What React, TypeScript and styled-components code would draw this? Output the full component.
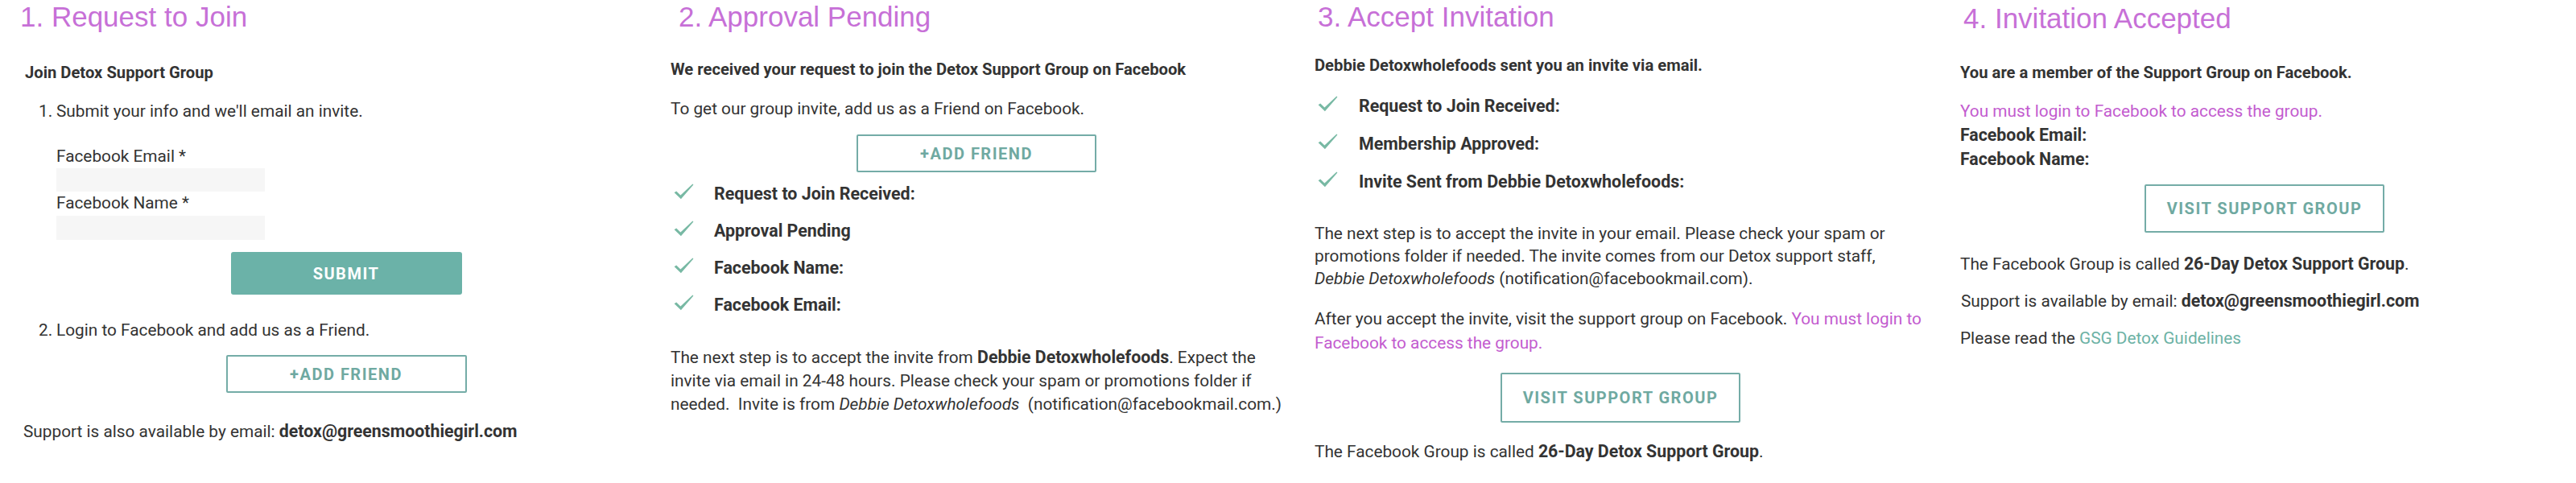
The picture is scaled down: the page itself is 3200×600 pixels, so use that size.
import React from "react";
import styled, { createGlobalStyle } from "styled-components";

const GlobalStyle = createGlobalStyle`
  html, body {
    margin: 0;
    padding: 0;
    background: #ffffff;
  }
  body {
    width: 3200px;
    height: 600px;
    overflow: hidden;
    font-family: Roboto, "Liberation Sans", Arial, sans-serif;
    color: #333333;
  }
`;

const Page = styled.div`
  display: grid;
  grid-template-columns: repeat(4, 800px);
  width: 3200px;
  height: 600px;
  background: #ffffff;
`;

const Panel = styled.section<{ $left: number; $right: number }>`
  display: flex;
  flex-direction: column;
  align-items: stretch;
  padding: 0 ${(p) => p.$right}px 0 ${(p) => p.$left}px;
  box-sizing: border-box;
  width: 800px;
  height: 600px;
`;

const StepTitle = styled.h1<{ $indent: number; $mt: number }>`
  margin: ${(p) => p.$mt}px 0 0 ${(p) => p.$indent}px;
  font-family: "Liberation Sans", Arial, sans-serif;
  font-weight: 400;
  font-size: 35px;
  line-height: 40px;
  color: #c770d7;
  white-space: nowrap;
`;

const Lead = styled.p<{ $mt: number; $indent?: number }>`
  margin: ${(p) => p.$mt}px 0 0 ${(p) => p.$indent ?? 0}px;
  font-size: 20.2px;
  font-weight: 700;
  line-height: 29px;
  color: #333333;
  white-space: nowrap;
`;

const Text = styled.p<{ $mt: number; $lh?: number; $indent?: number }>`
  margin: ${(p) => p.$mt}px 0 0 ${(p) => p.$indent ?? 0}px;
  font-size: 20.8px;
  font-weight: 400;
  line-height: ${(p) => p.$lh ?? 29}px;
  color: #333333;
  white-space: nowrap;
`;

const Strong = styled.strong`
  font-weight: 700;
  font-size: 1.025em;
`;

const Em = styled.em`
  font-style: italic;
`;

const Purple = styled.span`
  color: #c35ccf;
`;

const Link = styled.a`
  color: #6db2a5;
  text-decoration: none;
`;

const Steps = styled.ol`
  list-style: none;
  margin: 0 0 0 19px;
  padding: 0;
  display: flex;
  flex-direction: column;
`;

const StepItem = styled.li<{ $mt: number }>`
  display: grid;
  grid-template-columns: 22px 1fr;
  margin-top: ${(p) => p.$mt}px;
  font-size: 20.8px;
  line-height: 29px;
  white-space: nowrap;
`;

const Num = styled.span`
  white-space: nowrap;
`;

const StepBody = styled.div`
  display: flex;
  flex-direction: column;
  min-width: 0;
`;

const FieldLabel = styled.label<{ $mt: number }>`
  display: block;
  margin-top: ${(p) => p.$mt}px;
  font-size: 20.8px;
  line-height: 29px;
`;

const FieldInput = styled.div<{ $mt: number; $h: number }>`
  margin-top: ${(p) => p.$mt}px;
  width: 259px;
  height: ${(p) => p.$h}px;
  background: #f6f6f6;
`;

const ButtonRow = styled.div<{ $mt: number }>`
  display: flex;
  justify-content: center;
  margin-top: ${(p) => p.$mt}px;
`;

const SolidButton = styled.button`
  width: 287px;
  height: 53px;
  border: none;
  border-radius: 3px;
  background: #6bb2a8;
  color: #ffffff;
  font-family: Roboto, sans-serif;
  font-weight: 700;
  font-size: 20px;
  letter-spacing: 1.5px;
  padding: 0;
`;

const OutlineButton = styled.button<{ $w: number; $h: number }>`
  width: ${(p) => p.$w}px;
  height: ${(p) => p.$h}px;
  box-sizing: border-box;
  border: 2px solid #74aca7;
  border-radius: 2px;
  background: #ffffff;
  color: #6fa9a1;
  font-family: Roboto, sans-serif;
  font-weight: 700;
  font-size: 20px;
  letter-spacing: 1.5px;
  padding: 0;
`;

const CheckList = styled.ul<{ $mt: number; $gap: number }>`
  list-style: none;
  margin: ${(p) => p.$mt}px 0 0;
  padding: 0;
  display: flex;
  flex-direction: column;
  gap: ${(p) => p.$gap}px;
`;

const CheckRow = styled.li<{ $textGap: number }>`
  display: flex;
  align-items: center;
  gap: ${(p) => p.$textGap}px;
  padding-left: 4px;
  height: 29px;
  font-size: 21.4px;
  font-weight: 700;
  line-height: 29px;
  white-space: nowrap;
`;

const CheckSvg = styled.svg`
  flex: none;
  width: 25px;
  height: 20px;
  margin-top: -6px;
`;

const Check = () => (
  <CheckSvg viewBox="0 0 25 20">
    <path
      d="M0.6 11.2 L3.2 9.4 L8.4 14.6 L23.4 0.6 L24.4 1.4 L8.9 19.2 Z"
      fill="#78b9a4"
    />
  </CheckSvg>
);

const CheckItems = ({
  items,
  mt,
  gap,
  textGap,
}: {
  items: string[];
  mt: number;
  gap: number;
  textGap: number;
}) => (
  <CheckList $mt={mt} $gap={gap}>
    {items.map((item) => (
      <CheckRow key={item} $textGap={textGap}>
        <Check />
        {item}
      </CheckRow>
    ))}
  </CheckList>
);

const RequestPanel = () => (
  <Panel $left={29} $right={10}>
    <StepTitle $indent={-4} $mt={1}>
      1. Request to Join
    </StepTitle>
    <Lead $mt={35} $indent={2}>
      Join Detox Support Group
    </Lead>
    <Steps>
      <StepItem $mt={19}>
        <Num>1.</Num>
        <StepBody>
          <span>Submit your info and we'll email an invite.</span>
          <FieldLabel $mt={27}>Facebook Email *</FieldLabel>
          <FieldInput $mt={0} $h={29} />
          <FieldLabel $mt={0}>Facebook Name *</FieldLabel>
          <FieldInput $mt={1} $h={30} />
          <ButtonRow $mt={15}>
            <SolidButton>SUBMIT</SolidButton>
          </ButtonRow>
        </StepBody>
      </StepItem>
      <StepItem $mt={30}>
        <Num>2.</Num>
        <StepBody>
          <span>Login to Facebook and add us as a Friend.</span>
          <ButtonRow $mt={16}>
            <OutlineButton $w={299} $h={47}>
              +ADD FRIEND
            </OutlineButton>
          </ButtonRow>
        </StepBody>
      </StepItem>
    </Steps>
    <Text $mt={33}>
      Support is also available by email:{" "}
      <Strong>detox@greensmoothiegirl.com</Strong>
    </Text>
  </Panel>
);

const PendingPanel = () => (
  <Panel $left={33} $right={7}>
    <StepTitle $indent={10} $mt={1}>
      2. Approval Pending
    </StepTitle>
    <Lead $mt={31}>
      We received your request to join the Detox Support Group on Facebook
    </Lead>
    <Text $mt={20}>To get our group invite, add us as a Friend on Facebook.</Text>
    <ButtonRow $mt={17}>
      <OutlineButton $w={298} $h={47}>
        +ADD FRIEND
      </OutlineButton>
    </ButtonRow>
    <CheckItems
      mt={12}
      gap={17}
      textGap={25}
      items={[
        "Request to Join Received:",
        "Approval Pending",
        "Facebook Name:",
        "Facebook Email:",
      ]}
    />
    <Text $mt={36}>
      The next step is to accept the invite from{" "}
      <Strong>Debbie Detoxwholefoods</Strong>. Expect the
      <br />
      invite via email in 24-48 hours. Please check your spam or promotions
      folder if
      <br />
      needed.&nbsp; Invite is from <Em>Debbie Detoxwholefoods</Em>&nbsp;
      (notification@facebookmail.com.)
    </Text>
  </Panel>
);

const InvitePanel = () => (
  <Panel $left={33} $right={7}>
    <StepTitle $indent={4} $mt={1}>
      3. Accept Invitation
    </StepTitle>
    <Lead $mt={26}>Debbie Detoxwholefoods sent you an invite via email.</Lead>
    <CheckItems
      mt={21}
      gap={18}
      textGap={26}
      items={[
        "Request to Join Received:",
        "Membership Approved:",
        "Invite Sent from Debbie Detoxwholefoods:",
      ]}
    />
    <Text $mt={36} $lh={28}>
      The next step is to accept the invite in your email. Please check your
      spam or
      <br />
      promotions folder if needed. The invite comes from our Detox support
      staff,
      <br />
      <Em>Debbie Detoxwholefoods</Em> (notification@facebookmail.com).
    </Text>
    <Text $mt={21} $lh={30}>
      After you accept the invite, visit the support group on Facebook.{" "}
      <Purple>
        You must login to
        <br />
        Facebook to access the group.
      </Purple>
    </Text>
    <ButtonRow $mt={22}>
      <OutlineButton $w={298} $h={62}>
        VISIT SUPPORT GROUP
      </OutlineButton>
    </ButtonRow>
    <Text $mt={21}>
      The Facebook Group is called <Strong>26-Day Detox Support Group</Strong>.
    </Text>
  </Panel>
);

const AcceptedPanel = () => (
  <Panel $left={35} $right={9}>
    <StepTitle $indent={4} $mt={3}>
      4. Invitation Accepted
    </StepTitle>
    <Lead $mt={33}>You are a member of the Support Group on Facebook.</Lead>
    <Text $mt={19}>
      <Purple>You must login to Facebook to access the group.</Purple>
      <br />
      <Strong>Facebook Email:</Strong>
      <br />
      <Strong>Facebook Name:</Strong>
    </Text>
    <ButtonRow $mt={16}>
      <OutlineButton $w={298} $h={60}>
        VISIT SUPPORT GROUP
      </OutlineButton>
    </ButtonRow>
    <Text $mt={24}>
      The Facebook Group is called <Strong>26-Day Detox Support Group</Strong>.
    </Text>
    <Text $mt={16} $indent={1}>
      Support is available by email:{" "}
      <Strong>detox@greensmoothiegirl.com</Strong>
    </Text>
    <Text $mt={17}>
      Please read the <Link href="#">GSG Detox Guidelines</Link>
    </Text>
  </Panel>
);

const App: React.FC = () => (
  <>
    <GlobalStyle />
    <Page>
      <RequestPanel />
      <PendingPanel />
      <InvitePanel />
      <AcceptedPanel />
    </Page>
  </>
);

export default App;
